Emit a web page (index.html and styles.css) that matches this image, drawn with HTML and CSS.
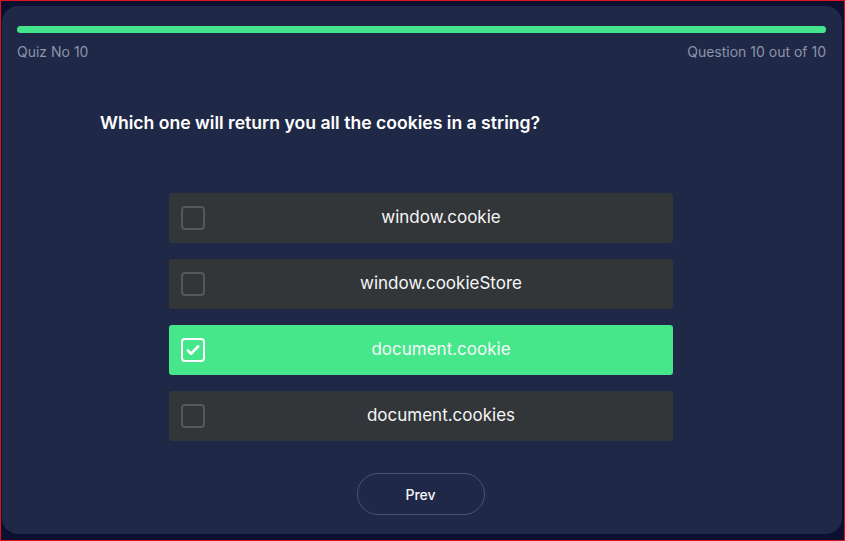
FILE: index.html
```html
<!DOCTYPE html>
<html>
<head>
<meta charset="utf-8">
<link rel="stylesheet" href="styles.css">
</head>
<body>
<div class="frame">
  <div class="card">
    <div class="progress"><div class="progress-fill"></div></div>
    <div class="meta">
      <span>Quiz No 10</span>
      <span>Question 10 out of 10</span>
    </div>
    <h2 class="question">Which one will return you all the cookies in a string?</h2>
    <div class="options">
      <div class="option"><span class="box"></span><span class="label">window.cookie</span></div>
      <div class="option"><span class="box"></span><span class="label">window.cookieStore</span></div>
      <div class="option selected"><span class="box"><svg viewBox="0 0 24 24" width="18" height="18"><path d="M5 12.5l4.5 4.5L19 7" fill="none" stroke="#fff" stroke-width="3.4" stroke-linecap="round" stroke-linejoin="round"/></svg></span><span class="label">document.cookie</span></div>
      <div class="option"><span class="box"></span><span class="label">document.cookies</span></div>
    </div>
    <div class="actions"><button class="prev">Prev</button></div>
  </div>
</div>
</body>
</html>
```
FILE: styles.css
```css
html, body { margin: 0; padding: 0; }
body {
  width: 845px;
  height: 541px;
  background: #0b1030;
  font-family: "Inter", "Open Sans", sans-serif;
}
.frame {
  box-sizing: border-box;
  width: 845px;
  height: 541px;
  border: 1px solid #e0121b;
  padding: 5px 2px 6px 1px;
}
.card {
  box-sizing: border-box;
  height: 100%;
  background: #1f2947;
  border-radius: 16px;
  padding: 20px 16px 0 15px;
  display: flex;
  flex-direction: column;
}
.progress {
  height: 7px;
  border-radius: 4px;
  background: #2d3654;
}
.progress-fill {
  height: 100%;
  width: 100%;
  border-radius: 4px;
  background: #45e68b;
}
.meta {
  display: flex;
  justify-content: space-between;
  margin-top: 9px;
  font-size: 14px;
  color: #8d93a8;
  line-height: 20px;
}
.question {
  margin: 49px 0 0 83px;
  font-size: 17.6px;
  font-weight: 600;
  color: #ffffff;
  line-height: 24px;
}
.options {
  margin: 58px 0 0 152px;
  width: 504px;
  display: flex;
  flex-direction: column;
  gap: 16px;
}
.option {
  height: 50px;
  background: #333638;
  border-radius: 3px;
  display: flex;
  align-items: center;
  padding: 0 12px;
}
.option.selected { background: #46e68b; }
.box {
  box-sizing: border-box;
  width: 24px;
  height: 24px;
  border: 2px solid #54575b;
  border-radius: 4px;
  display: flex;
  align-items: center;
  justify-content: center;
  flex: none;
}
.selected .box { border-color: #ffffff; }
.label {
  flex: 1;
  text-align: center;
  color: #f6f7f9;
  font-size: 17px;
  padding: 0 0 2px 16px;
}
.actions {
  display: flex;
  justify-content: center;
  margin-top: 32px;
  padding-right: 2px;
}
.prev {
  width: 128px;
  height: 42px;
  border-radius: 21px;
  border: 1px solid #4a5270;
  background: transparent;
  color: #f4f5f7;
  font-family: inherit;
  font-size: 14px;
  font-weight: 500;
}
```
